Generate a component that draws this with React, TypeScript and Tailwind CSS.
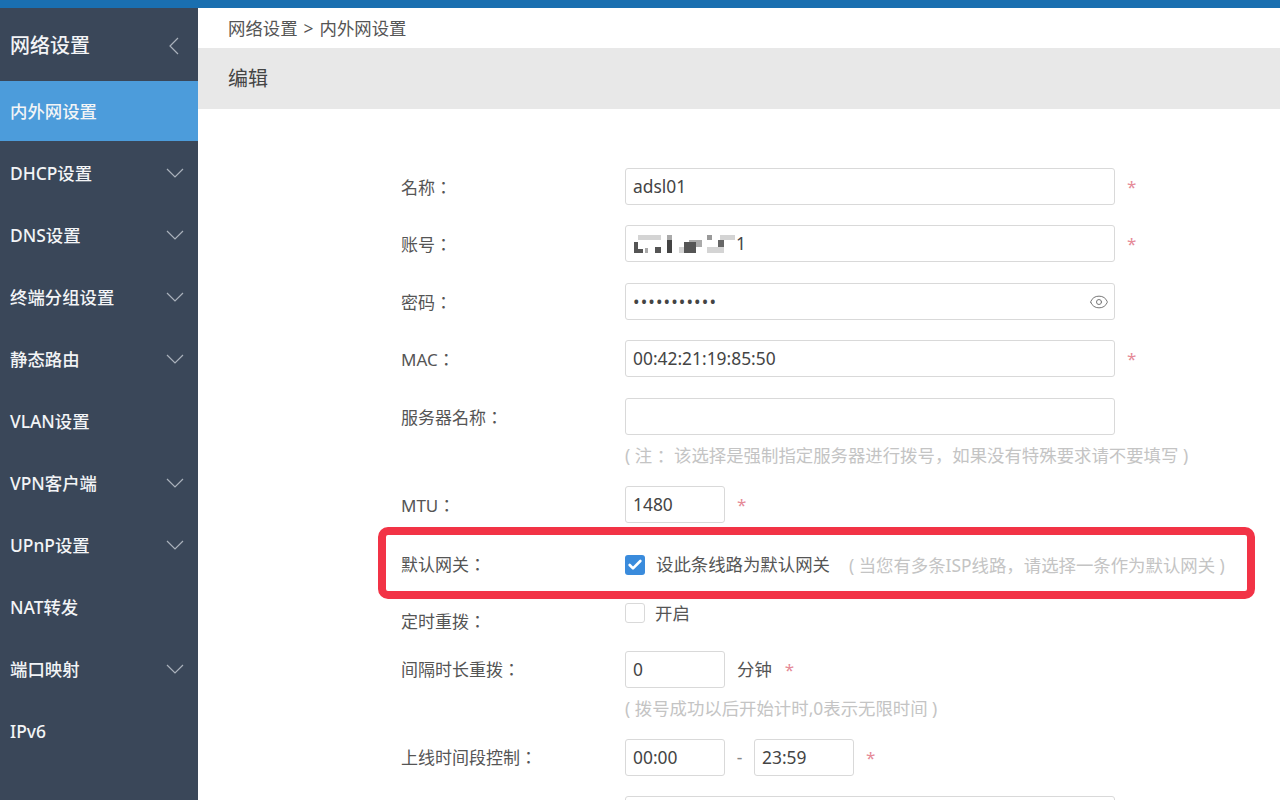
import { Eye, Check } from 'lucide-react';

const navItems = [
  { name: 'DHCP设置', arrow: true },
  { name: 'DNS设置', arrow: true },
  { name: '终端分组设置', arrow: true },
  { name: '静态路由', arrow: true },
  { name: 'VLAN设置', arrow: false },
  { name: 'VPN客户端', arrow: true },
  { name: 'UPnP设置', arrow: true },
  { name: 'NAT转发', arrow: false },
  { name: '端口映射', arrow: true },
  { name: 'IPv6', arrow: false },
];

function Star({ className }: { className: string }) {
  return <span className={`text-[17px] leading-none text-[#e58a97] ${className}`}>*</span>;
}

function Field({
  value,
  className = 'w-[490px]',
  type = 'text',
}: {
  value: string;
  className?: string;
  type?: string;
}) {
  return (
    <input
      readOnly
      type={type}
      value={value}
      className={`h-[37px] shrink-0 rounded-[3px] border border-[#d9d9d9] bg-white px-[7px] pb-px text-[17.4px] text-[#444] outline-none ${className}`}
    />
  );
}

function Label({ children }: { children: string }) {
  return <div className="w-[224px] shrink-0 pt-[2px] font-['Noto_Sans','Noto_Sans_CJK_TC',sans-serif] text-[17px] text-[#555]">{children}</div>;
}

function Hint({ children }: { children: string }) {
  return <div className="ml-[224px] h-[20px] text-[17.4px] leading-[20px] whitespace-nowrap text-[#c4c4c4]">{children}</div>;
}

// the account name is pixelated in the picture
function Mosaic() {
  return (
    <svg width="102" height="24" viewBox="0 0 102 24" className="blur-[0.4px]">
      <rect x="4" y="4" width="23" height="5" fill="#d4d4d4" />
      <rect x="0" y="11" width="4" height="11" fill="#555" />
      <rect x="0" y="18" width="9" height="4" fill="#555" />
      <rect x="11" y="17" width="3" height="5" fill="#aaa" />
      <rect x="21" y="16" width="6" height="6" fill="#555" />
      <rect x="33" y="4" width="5" height="5" fill="#aaa" />
      <rect x="33" y="9" width="5" height="13" fill="#444" />
      <rect x="45" y="16" width="5" height="6" fill="#d4d4d4" />
      <rect x="55" y="9" width="13" height="7" fill="#aaa" />
      <rect x="50" y="11" width="12" height="11" fill="#555" />
      <rect x="73" y="4" width="5" height="5" fill="#999" />
      <rect x="86" y="4" width="15" height="5" fill="#d4d4d4" />
      <rect x="73" y="16" width="17" height="6" fill="#d4d4d4" />
      <rect x="84" y="9" width="6" height="7" fill="#666" />
    </svg>
  );
}

export default function App() {
  return (
    <div className="relative flex h-[800px] flex-col overflow-hidden bg-white font-['Noto_Sans','Noto_Sans_CJK_SC',sans-serif]">
      <div className="h-[8px] shrink-0 bg-[#1a6fb0]" />
      <div className="flex min-h-0 flex-1">
        <aside className="w-[198px] shrink-0 bg-[#3a4759] text-[#f2f4f6]">
          <div className="flex h-[73px] items-center justify-between pt-[2px] pr-[19px] pl-[10px] text-[20px] font-medium">
            网络设置
            <svg width="10" height="18" viewBox="0 0 10 18" fill="none" stroke="#aab2bc" strokeWidth="1.2">
              <path d="M9 1 1 9l8 8" />
            </svg>
          </div>
          <div className="flex h-[60px] items-center bg-[#4c9cdb] pt-px pl-[10px] text-[17.4px] font-medium">内外网设置</div>
          <nav className="pt-px">
            {navItems.map((item) => (
              <div key={item.name} className="flex h-[62px] items-center justify-between pt-px pr-[14px] pl-[10px] text-[17.4px] font-medium">
                {item.name}
                {item.arrow && (
                  <svg width="18" height="10" viewBox="0 0 18 10" fill="none" stroke="#aab2bc" strokeWidth="1.2" className="-mt-[2px]">
                    <path d="M1 1l8 8 8-8" />
                  </svg>
                )}
              </div>
            ))}
          </nav>
        </aside>

        <main className="min-w-0 flex-1">
          <div className="flex h-[40px] items-center pl-[30px] text-[17.4px] text-[#555]">
            网络设置<span className="mx-[6px]">&gt;</span>内外网设置
          </div>
          <div className="flex h-[61px] items-center bg-[#e8e8e8] pl-[30px] text-[20px] text-[#444]">编辑</div>

          <form className="flex flex-col pt-[59px] pl-[203px]">
            <div className="flex items-center">
              <Label>名称：</Label>
              <Field value="adsl01" />
              <Star className="ml-[12px]" />
            </div>
            <div className="mt-[20px] flex items-center">
              <Label>账号：</Label>
              <div className="relative">
                <Field value="" />
                <div className="absolute top-[6px] left-[9px] flex items-center">
                  <Mosaic />
                  <span className="text-[17.4px] leading-[24px] text-[#444]">1</span>
                </div>
              </div>
              <Star className="ml-[12px]" />
            </div>
            <div className="mt-[21px] flex items-center">
              <Label>密码：</Label>
              <div className="relative">
                <Field value="12345678901" type="password" className="w-[490px] tracking-[1.1px]" />
                <Eye size={20} strokeWidth={1.2} className="absolute top-[9px] right-[6px] text-[#777]" />
              </div>
            </div>
            <div className="mt-[20px] flex items-center">
              <Label>MAC：</Label>
              <Field value="00:42:21:19:85:50" />
              <Star className="ml-[12px]" />
            </div>
            <div className="mt-[21px] flex items-center">
              <Label>服务器名称：</Label>
              <Field value="" />
            </div>
            <div className="mt-[10px]">
              <Hint>( 注 ：该选择是强制指定服务器进行拨号，如果没有特殊要求请不要填写 )</Hint>
            </div>
            <div className="mt-[21px] flex items-center">
              <Label>MTU：</Label>
              <Field value="1480" className="w-[100px]" />
              <Star className="ml-[12px]" />
            </div>

            <div className="mt-[32px] flex h-[20px] items-center">
              <div className="w-[224px] shrink-0 font-['Noto_Sans','Noto_Sans_CJK_TC',sans-serif] text-[17px] text-[#555]">默认网关：</div>
              <span className="flex h-[20px] w-[20px] items-center justify-center rounded-[3px] bg-[#3a8bdc]">
                <Check size={16} strokeWidth={4} className="text-white" />
              </span>
              <span className="ml-[11px] -mt-px text-[17.4px] text-[#555]">设此条线路为默认网关</span>
              <span className="ml-[19px] text-[17.4px] whitespace-nowrap text-[#c4c4c4]">( 当您有多条ISP线路，请选择一条作为默认网关 )</span>
            </div>

            <div className="mt-[28px] flex items-start">
              <div className="w-[224px] shrink-0 pt-[6px] font-['Noto_Sans','Noto_Sans_CJK_TC',sans-serif] text-[17px] text-[#555]">定时重拨：</div>
              <span className="h-[20px] w-[20px] rounded-[3px] border border-[#d9d9d9]" />
              <span className="ml-[10px] -mt-px text-[17.4px] leading-[22px] text-[#555]">开启</span>
            </div>

            <div className="mt-[16px] flex items-center">
              <Label>间隔时长重拨：</Label>
              <Field value="0" className="w-[100px]" />
              <span className="ml-[12px] text-[17.4px] text-[#555]">分钟</span>
              <Star className="ml-[13px]" />
            </div>
            <div className="mt-[10px]">
              <Hint>( 拨号成功以后开始计时,0表示无限时间 )</Hint>
            </div>
            <div className="mt-[21px] flex items-center">
              <Label>上线时间段控制：</Label>
              <Field value="00:00" className="w-[100px]" />
              <span className="w-[29px] text-center text-[17.4px] text-[#888]">-</span>
              <Field value="23:59" className="w-[100px]" />
              <Star className="ml-[12px]" />
            </div>
            <div className="mt-[20px] ml-[224px]">
              <Field value="" />
            </div>
          </form>
        </main>
      </div>

      {/* annotation drawn over the screenshot */}
      <div className="absolute top-[527px] left-[378px] h-[72px] w-[877px] rounded-[10px] border-[8px] border-[#f23346]" />
    </div>
  );
}
